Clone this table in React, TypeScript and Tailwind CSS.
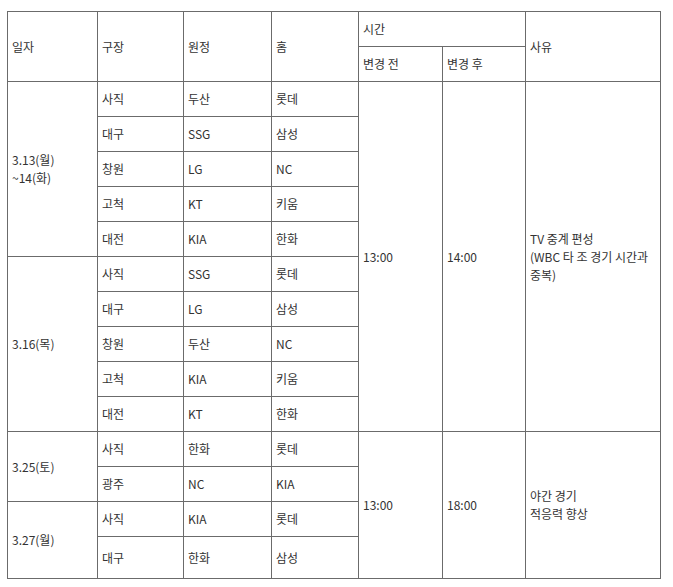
import React from "react";

const C = "border border-[#6b6b6b] px-[4px] align-middle text-left font-normal";

type Row = { place: string; away: string; home: string };

const g1: Row[] = [
  { place: "사직", away: "두산", home: "롯데" },
  { place: "대구", away: "SSG", home: "삼성" },
  { place: "창원", away: "LG", home: "NC" },
  { place: "고척", away: "KT", home: "키움" },
  { place: "대전", away: "KIA", home: "한화" },
];
const g2: Row[] = [
  { place: "사직", away: "SSG", home: "롯데" },
  { place: "대구", away: "LG", home: "삼성" },
  { place: "창원", away: "두산", home: "NC" },
  { place: "고척", away: "KIA", home: "키움" },
  { place: "대전", away: "KT", home: "한화" },
];

export default function App() {
  return (
    <div
      className="w-[673px] h-[587px] bg-white pl-[7px] pt-[11px] text-[12px] text-[#333333]"
      style={{ fontFamily: '"Malgun Gothic", "Noto Sans CJK KR", sans-serif' }}
    >
      <table className="border-collapse table-fixed w-[653px] leading-[18px]">
        <colgroup>
          <col className="w-[90px]" />
          <col className="w-[86px]" />
          <col className="w-[88px]" />
          <col className="w-[87px]" />
          <col className="w-[84px]" />
          <col className="w-[83px]" />
          <col className="w-[135px]" />
        </colgroup>
        <thead>
          <tr className="h-[35px]">
            <th rowSpan={2} className={C}>일자</th>
            <th rowSpan={2} className={C}>구장</th>
            <th rowSpan={2} className={C}>원정</th>
            <th rowSpan={2} className={C}>홈</th>
            <th colSpan={2} className={C}>시간</th>
            <th rowSpan={2} className={C}>사유</th>
          </tr>
          <tr className="h-[35px]">
            <th className={C}>변경 전</th>
            <th className={C}>변경 후</th>
          </tr>
        </thead>
        <tbody>
          {g1.map((r, i) => (
            <tr key={"a" + i} className="h-[35px]">
              {i === 0 && (
                <td rowSpan={5} className={C}>
                  3.13(월)
                  <br />
                  ~14(화)
                </td>
              )}
              <td className={C}>{r.place}</td>
              <td className={C}>{r.away}</td>
              <td className={C}>{r.home}</td>
              {i === 0 && (
                <>
                  <td rowSpan={10} className={C}>13:00</td>
                  <td rowSpan={10} className={C}>14:00</td>
                  <td rowSpan={10} className={C}>
                    TV 중계 편성
                    <br />
                    (WBC 타 조 경기 시간과 중복)
                  </td>
                </>
              )}
            </tr>
          ))}
          {g2.map((r, i) => (
            <tr key={"b" + i} className="h-[35px]">
              {i === 0 && (
                <td rowSpan={5} className={C}>3.16(목)</td>
              )}
              <td className={C}>{r.place}</td>
              <td className={C}>{r.away}</td>
              <td className={C}>{r.home}</td>
            </tr>
          ))}
          <tr className="h-[35px]">
            <td rowSpan={2} className={C}>3.25(토)</td>
            <td className={C}>사직</td>
            <td className={C}>한화</td>
            <td className={C}>롯데</td>
            <td rowSpan={4} className={C}>13:00</td>
            <td rowSpan={4} className={C}>18:00</td>
            <td rowSpan={4} className={C}>
              야간 경기
              <br />
              적응력 향상
            </td>
          </tr>
          <tr className="h-[35px]">
            <td className={C}>광주</td>
            <td className={C}>NC</td>
            <td className={C}>KIA</td>
          </tr>
          <tr className="h-[35px]">
            <td rowSpan={2} className={C}>3.27(월)</td>
            <td className={C}>사직</td>
            <td className={C}>KIA</td>
            <td className={C}>롯데</td>
          </tr>
          <tr className="h-[42px]">
            <td className={C}>대구</td>
            <td className={C}>한화</td>
            <td className={C}>삼성</td>
          </tr>
        </tbody>
      </table>
    </div>
  );
}
